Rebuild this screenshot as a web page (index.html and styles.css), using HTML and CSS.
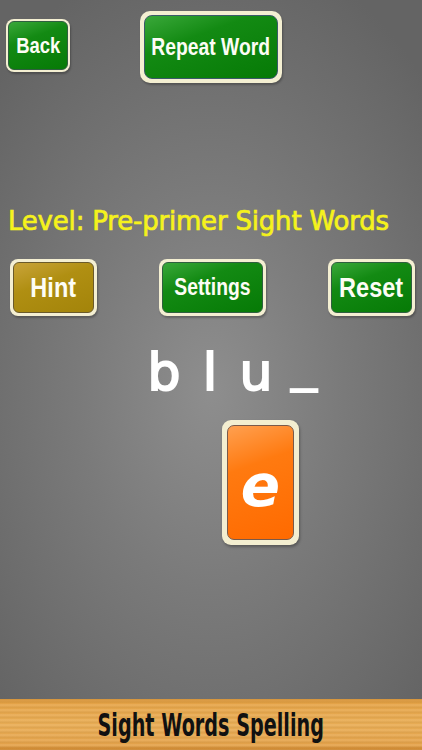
FILE: index.html
```html
<!DOCTYPE html>
<html>
<head>
<meta charset="utf-8">
<link rel="stylesheet" href="styles.css">
</head>
<body>
<div class="screen">
  <div class="top-row">
    <div class="btn btn-back"><span><b>Back</b></span></div>
    <div class="btn btn-repeat"><span><b>Repeat Word</b></span></div>
  </div>
  <div class="level">Level: Pre-primer Sight Words</div>
  <div class="mid-row">
    <div class="btn btn-hint"><span><b>Hint</b></span></div>
    <div class="btn btn-settings"><span><b>Settings</b></span></div>
    <div class="btn btn-reset"><span><b>Reset</b></span></div>
  </div>
  <div class="word">
    <span class="ch">b</span>
    <span class="ch">l</span>
    <span class="ch">u</span>
    <span class="ch blank">_</span>
  </div>
  <div class="card-row">
    <div class="card"><span>e</span></div>
  </div>
  <div class="spacer"></div>
  <div class="footer"><span>Sight Words Spelling</span></div>
</div>
</body>
</html>
```
FILE: styles.css
```css
html, body {
  margin: 0;
  padding: 0;
}
body {
  width: 422px;
  height: 750px;
  overflow: hidden;
  font-family: "Liberation Sans", Arial, sans-serif;
}
.screen {
  width: 422px;
  height: 750px;
  display: flex;
  flex-direction: column;
  background: radial-gradient(ellipse 70% 60% at 50% 52%, #8e8e8e 0%, #7a7a7a 45%, #646464 100%);
}
.btn {
  box-sizing: border-box;
  background: #f4efd2;
  border-radius: 8px;
  display: flex;
  padding: 2px;
  box-shadow: 1px 2px 2px rgba(0,0,0,0.25);
}
.btn span {
  flex: 1;
  min-width: 0;
  display: flex;
  align-items: center;
  justify-content: center;
  border-radius: 6px;
  color: #fdfdf5;
  background: linear-gradient(160deg, #3aa83a 0%, #138a13 35%, #067a06 100%);
  border: 1px solid #2f5f3f;
  white-space: nowrap;
}
.btn b {
  display: inline-block;
  font-family: "Liberation Sans", Arial, sans-serif;
  font-weight: bold;
  transform: scaleX(0.84);
  white-space: nowrap;
}
.top-row {
  display: flex;
  align-items: flex-start;
  height: 90px;
}
.btn-back {
  margin-left: 6px;
  margin-top: 19px;
  width: 64px;
  height: 53px;
}
.btn-back b { font-size: 22px; }
.btn-repeat {
  margin-left: 70px;
  margin-top: 11px;
  width: 142px;
  height: 72px;
  padding: 4px;
  border-radius: 10px;
}
.btn-repeat span { border-radius: 8px; border-color: #3a5a6a; }
.btn-repeat b { font-size: 23px; }
.level {
  margin-top: 112px;
  margin-left: 8px;
  height: 38px;
  color: #f5f21c;
  font-family: "DejaVu Sans", sans-serif;
  font-size: 26px;
  line-height: 38px;
  white-space: nowrap;
  -webkit-text-stroke: 0.7px #f5f21c;
  letter-spacing: -0.2px;
}
.mid-row {
  margin-top: 19px;
  display: flex;
  justify-content: space-between;
  padding: 0 7px 0 10px;
  height: 57px;
}
.mid-row .btn {
  height: 57px;
  padding: 3px;
}
.btn-hint { width: 87px; }
.btn-settings { width: 107px; }
.btn-reset { width: 87px; }
.btn-hint span {
  background: linear-gradient(160deg, #c9a43a 0%, #b08f12 40%, #a3840a 100%);
  border-color: #6a5a2a;
}
.btn-hint b { font-size: 28px; }
.btn-settings b { font-size: 23px; }
.btn-reset b { font-size: 28px; }
.word {
  margin-top: 26px;
  margin-left: 141px;
  display: flex;
  height: 60px;
}
.ch {
  width: 46px;
  text-align: center;
  color: #ffffff;
  font-family: "DejaVu Sans", sans-serif;
  font-size: 52px;
  line-height: 60px;
  -webkit-text-stroke: 2px #ffffff;
}
.blank {
  font-weight: bold;
  -webkit-text-stroke: 0;
  transform: translate(2px, -9px) scaleX(1.1);
}
.card-row {
  margin-top: 18px;
  margin-left: 222px;
  display: flex;
}
.card {
  box-sizing: border-box;
  width: 77px;
  height: 125px;
  padding: 5px;
  background: #f3eed0;
  border-radius: 9px;
  display: flex;
  box-shadow: 1px 2px 3px rgba(0,0,0,0.3);
}
.card span {
  flex: 1;
  border-radius: 7px;
  border: 1px solid #7a5a4a;
  background: linear-gradient(160deg, #ffa050 0%, #ff7a10 35%, #ff6a00 100%);
  display: flex;
  align-items: center;
  justify-content: center;
  color: #ffffff;
  font-family: "DejaVu Sans", sans-serif;
  font-weight: bold;
  font-style: italic;
  font-size: 58px;
  padding-top: 6px;
}
.spacer { flex: 1; }
.footer {
  height: 51px;
  display: flex;
  align-items: center;
  justify-content: center;
  background:
    repeating-linear-gradient(180deg, rgba(255,255,255,0.08) 0px, rgba(255,255,255,0.08) 2px, rgba(0,0,0,0.05) 3px, rgba(0,0,0,0.0) 5px),
    linear-gradient(180deg, #d08a2a 0%, #e6a448 8%, #e9ad55 50%, #e4a24a 92%, #c8822a 100%);
}
.footer span {
  display: inline-block;
  font-family: "DejaVu Sans", sans-serif;
  font-weight: bold;
  font-size: 32px;
  color: #111;
  transform: scaleX(0.6);
  white-space: nowrap;
}
```
